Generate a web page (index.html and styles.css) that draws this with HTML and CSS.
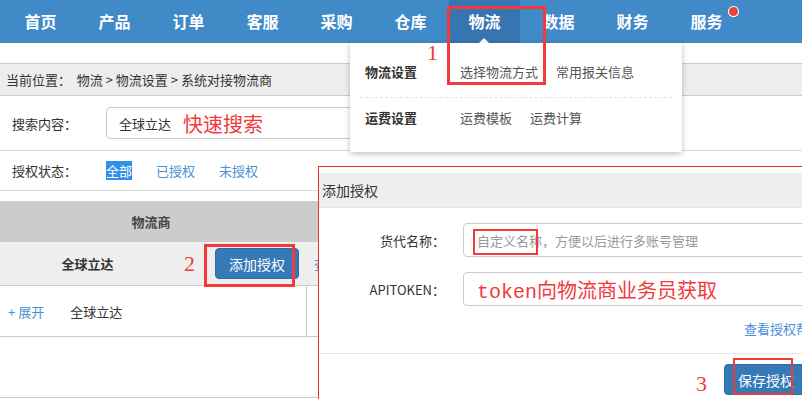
FILE: index.html
```html
<!DOCTYPE html>
<html lang="zh-CN">
<head>
    <meta charset="UTF-8">
    <meta name="viewport" content="width=device-width, initial-scale=1.0">
    <title>系统对接物流商</title>
    <link rel="stylesheet" href="styles.css">
</head>
<body>
    <div class="topnav">
        <a href="#">首页</a>
        <a href="#">产品</a>
        <a href="#">订单</a>
        <a href="#">客服</a>
        <a href="#">采购</a>
        <a href="#">仓库</a>
        <a href="#" class="active">物流</a>
        <a href="#">数据</a>
        <a href="#">财务</a>
        <a href="#" class="has-dot">服务</a>
    </div>

    <div class="crumb">当前位置：&nbsp; 物流 &gt; 物流设置 &gt; 系统对接物流商</div>

    <div class="filter-row search-row">
        <span class="filter-label">搜索内容：</span>
        <div class="fake-input">全球立达<span class="note-text">快速搜索</span></div>
    </div>

    <div class="filter-row status-row">
        <span class="filter-label">授权状态：</span>
        <a href="#" class="status on">全部</a>
        <a href="#" class="status">已授权</a>
        <a href="#" class="status">未授权</a>
    </div>

    <div class="table">
        <div class="thead">
            <div class="th">物流商</div>
        </div>
        <div class="group-row">
            <div class="group-name">全球立达</div>
            <button class="btn">添加授权</button>
            <a href="#" class="link">查看</a>
        </div>
        <div class="item-row">
            <div class="item-cell"><a href="#" class="link">+&nbsp;展开</a><span class="item-name">全球立达</span></div>
        </div>
        <div class="empty-row"></div>
    </div>

    <!-- dropdown under 物流 -->
    <div class="dropdown">
        <div class="dd-row dd-first">
            <span class="dd-title">物流设置</span>
            <a href="#">选择物流方式</a>
            <a href="#">常用报关信息</a>
        </div>
        <div class="dd-row">
            <span class="dd-title">运费设置</span>
            <a href="#">运费模板</a>
            <a href="#">运费计算</a>
        </div>
    </div>

    <!-- add auth dialog -->
    <div class="modal">
        <div class="modal-head">添加授权</div>
        <div class="modal-body">
            <div class="form-row">
                <label class="form-label">货代名称：</label>
                <div class="form-input placeholder">自定义名称，方便以后进行多账号管理</div>
            </div>
            <div class="form-row">
                <label class="form-label">APITOKEN：</label>
                <div class="form-input"><span class="note-token">token向物流商业务员获取</span></div>
            </div>
            <div class="help"><a href="#" class="link">查看授权帮助</a></div>
        </div>
        <div class="modal-foot">
            <button class="btn btn-save">保存授权</button>
        </div>
    </div>

    <!-- red annotations -->
    <div class="mark mark-nav"></div>
    <div class="mark mark-add"></div>
    <div class="mark thin mark-name"></div>
    <div class="mark thin mark-save"></div>
    <span class="num num-1">1</span>
    <span class="num num-2">2</span>
    <span class="num num-3">3</span>
</body>
</html>
```

FILE: styles.css
```css
html, body {
    margin: 0;
    overflow: hidden;
}
body {
    position: relative;
    width: 802px;
    height: 399px;
    font-family: "Noto Sans CJK SC", "Liberation Sans", sans-serif;
    font-size: 13px;
    color: #333;
    background-color: #fff;
}
a {
    text-decoration: none;
}

/* top nav */
.topnav {
    display: flex;
    height: 43px;
    padding-left: 5px;
    background-color: #408ac8;
}
.topnav a {
    position: relative;
    width: 71px;
    margin-right: 3px;
    text-align: center;
    line-height: 43px;
    font-size: 16px;
    font-weight: bold;
    color: #fff;
}
.topnav a.active {
    background-color: #3775b0;
}
.topnav a.active::after {
    content: "";
    position: absolute;
    left: 30px;
    bottom: 0;
    border-left: 5px solid transparent;
    border-right: 5px solid transparent;
    border-bottom: 5px solid #fff;
}
.topnav a.has-dot::after {
    content: "";
    position: absolute;
    left: 58px;
    top: 7px;
    width: 9px;
    height: 9px;
    border-radius: 50%;
    background-color: #e8403a;
    box-shadow: 0 0 0 1px #fff;
}

/* breadcrumb */
.crumb {
    margin-top: 20px;
    height: 31px;
    line-height: 31px;
    padding-left: 6px;
    background-color: #ededed;
    border-top: 1px solid #ccc;
    border-bottom: 1px solid #ccc;
}

/* filters */
.filter-row {
    display: flex;
    align-items: center;
    padding-left: 12px;
    border-bottom: 1px solid #d5d5d5;
}
.search-row {
    height: 54px;
}
.status-row {
    height: 39px;
}
.filter-label {
    width: 94px;
    flex-shrink: 0;
}
.fake-input {
    display: flex;
    align-items: center;
    box-sizing: border-box;
    width: 420px;
    height: 32px;
    padding-left: 12px;
    border: 1px solid #ccc;
    border-radius: 4px;
}
.note-text {
    margin-left: 12px;
    font-size: 20px;
    color: #f2393c;
}
.status {
    margin-right: 24px;
    color: #4a8fd4;
}
.status.on {
    background-color: #3390e8;
    color: #fff;
    line-height: 19px;
}
.link {
    color: #4a8fd4;
}

/* table */
.table {
    margin-top: 10px;
}
.thead {
    display: flex;
    height: 41px;
    align-items: center;
    background-color: #cccccc;
}
.th {
    width: 302px;
    text-align: center;
    font-weight: bold;
    color: #444;
}
.group-row {
    display: flex;
    align-items: center;
    height: 43px;
    background-color: #eeeeee;
    border-bottom: 1px solid #ccc;
}
.group-name {
    width: 175px;
    text-align: center;
    font-weight: bold;
}
.btn {
    height: 31px;
    padding: 0 13px;
    border: 1px solid #2e6da4;
    border-radius: 4px;
    background-color: #337ab7;
    color: #fff;
    font-family: inherit;
    font-size: 14px;
    white-space: nowrap;
}
.group-row .btn {
    margin-left: 40px;
}
.group-row .link {
    margin-left: 15px;
    font-size: 14px;
}
.item-row {
    display: flex;
    height: 50px;
    border-bottom: 1px solid #ccc;
}
.item-cell {
    display: flex;
    align-items: center;
    width: 298px;
    padding-left: 8px;
    border-right: 1px solid #ccc;
}
.item-name {
    margin-left: 26px;
}
.empty-row {
    height: 60px;
    border-bottom: 1px solid #ccc;
}

/* dropdown */
.dropdown {
    position: absolute;
    left: 350px;
    top: 43px;
    width: 332px;
    height: 109px;
    background-color: #fff;
    box-shadow: 0 2px 6px rgba(0, 0, 0, 0.25);
}
.dd-row {
    display: flex;
    margin: 0 10px;
    padding: 10px 0 0 5px;
    line-height: 20px;
}
.dd-first {
    padding-top: 19px;
    padding-bottom: 15px;
    border-bottom: 1px dashed #e3e3e3;
}
.dd-title {
    width: 95px;
    font-weight: bold;
}
.dd-row a {
    margin-right: 18px;
    color: #555;
}

/* modal */
.modal {
    position: absolute;
    left: 318px;
    top: 166px;
    width: 560px;
    height: 250px;
    background-color: #fff;
    border: 1px solid #f02c2c;
}
.modal-head {
    margin-top: 6px;
    height: 34px;
    line-height: 34px;
    padding-left: 3px;
    background-color: #eee;
    border-bottom: 1px solid #e5e5e5;
    font-size: 14px;
}
.modal-body {
    padding-top: 15px;
}
.form-row {
    display: flex;
    align-items: center;
    margin-bottom: 15px;
}
.form-row + .form-row {
    margin-bottom: 0;
}
.form-label {
    flex-shrink: 0;
    width: 126px;
    margin-right: 18px;
    text-align: right;
}
.form-input {
    flex-shrink: 0;
    display: flex;
    align-items: center;
    box-sizing: border-box;
    width: 400px;
    height: 34px;
    padding-left: 13px;
    border: 1px solid #ccc;
    border-radius: 4px;
}
.placeholder {
    color: #999;
}
.note-token {
    font-family: "Liberation Mono", "Noto Sans CJK SC", monospace;
    font-size: 20px;
    color: #f2393c;
}
.help {
    height: 47px;
    line-height: 46px;
    padding-left: 425px;
    white-space: nowrap;
}
.modal-foot {
    padding: 10px 0 0 405px;
    border-top: 1px solid #e5e5e5;
}
.btn-save {
    width: 90px;
    text-align: left;
}

/* annotations */
.mark {
    position: absolute;
    box-sizing: border-box;
    border: 3px solid #f23a3a;
}
.mark.thin {
    border-width: 2px;
}
.mark-nav {
    left: 447px;
    top: 6px;
    width: 99px;
    height: 79px;
}
.mark-add {
    left: 204px;
    top: 244px;
    width: 91px;
    height: 43px;
}
.mark-name {
    left: 473px;
    top: 229px;
    width: 65px;
    height: 26px;
}
.mark-save {
    left: 733px;
    top: 358px;
    width: 60px;
    height: 37px;
}
.num {
    position: absolute;
    font-family: "Liberation Serif", serif;
    font-size: 22px;
    line-height: 1;
    color: #f23a3a;
}
.num-1 {
    left: 427px;
    top: 42px;
}
.num-2 {
    left: 184px;
    top: 253px;
}
.num-3 {
    left: 696px;
    top: 373px;
}
```
